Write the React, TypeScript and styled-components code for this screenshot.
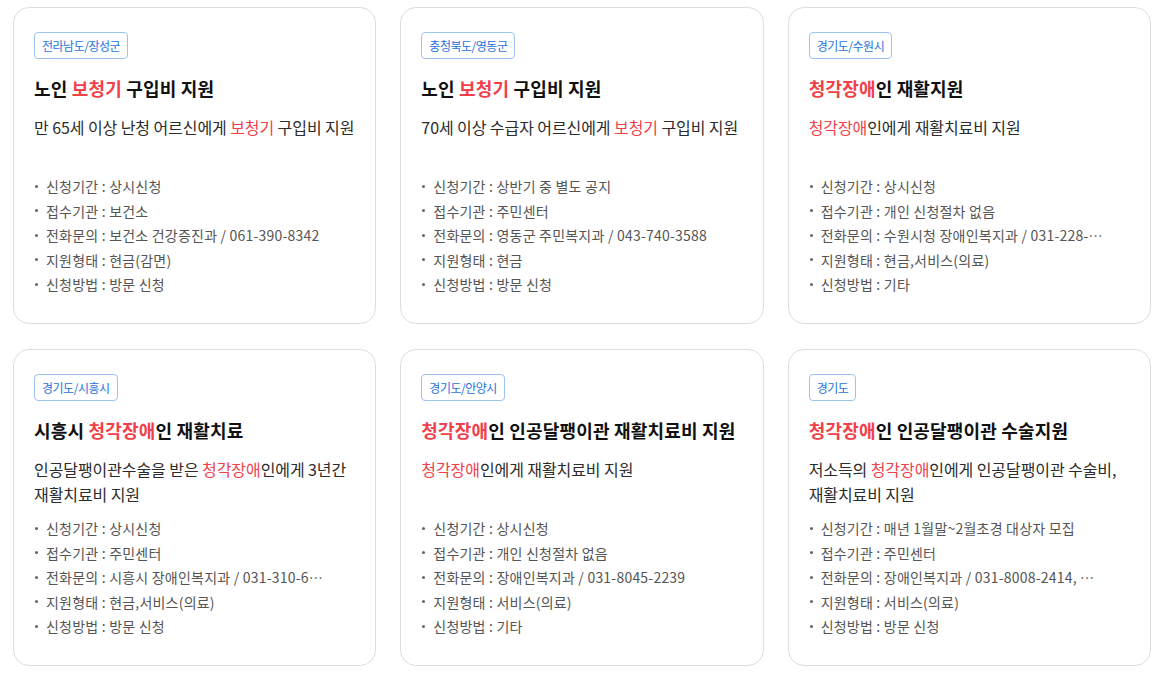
import React from "react";
import styled, { createGlobalStyle } from "styled-components";

const GlobalStyle = createGlobalStyle`
  html, body {
    margin: 0;
    padding: 0;
    background: #ffffff;
    font-family: "Noto Sans CJK KR", "Noto Sans", sans-serif;
  }
  * { box-sizing: border-box; }
`;

const Grid = styled.div`
  display: grid;
  grid-template-columns: repeat(3, 1fr);
  column-gap: 24px;
  row-gap: 25px;
  padding: 7px 12px 0 13px;
`;

const Card = styled.article`
  display: flex;
  flex-direction: column;
  align-items: flex-start;
  height: 317px;
  padding: 24px 20px 26px;
  border: 1px solid #dedede;
  border-radius: 16px;
  background: #ffffff;
  overflow: hidden;
`;

const Tag = styled.span`
  display: inline-block;
  height: 27px;
  padding: 0 7px;
  border: 1px solid #9cc3f1;
  border-radius: 4px;
  font-size: 12px;
  line-height: 25px;
  letter-spacing: -0.04em;
  color: #1f72dc;
  white-space: nowrap;
`;

const Title = styled.h3`
  margin: 16px 0 0;
  font-size: 18px;
  line-height: 26px;
  font-weight: 700;
  letter-spacing: 0.01em;
  color: #111111;
  word-break: keep-all;
`;

const Desc = styled.p`
  margin: 14px 0 0;
  min-height: 50px;
  font-size: 16px;
  line-height: 25px;
  font-weight: 400;
  letter-spacing: -0.005em;
  color: #2b2b2b;
  word-break: keep-all;
`;

const Hl = styled.span`
  color: #f2404a;
`;

const List = styled.ul`
  margin: 9px 0 0;
  padding: 0;
  list-style: none;
  width: 100%;
`;

const Item = styled.li`
  display: flex;
  align-items: center;
  height: 24.5px;
  font-size: 14px;
  letter-spacing: 0.015em;
  color: #555555;
  white-space: pre;

  &::before {
    content: "";
    flex: none;
    width: 3px;
    height: 3px;
    margin: 0 8px 0 1px;
    border-radius: 50%;
    background: #666666;
  }
`;

type CardData = {
  tag: string;
  title: string;
  desc: string;
  items: [string, string][];
};

const cards: CardData[] = [
  {
    tag: "전라남도/장성군",
    title: "노인 {보청기} 구입비 지원",
    desc: "만 65세 이상 난청 어르신에게 {보청기} 구입비 지원",
    items: [
      ["신청기간", "상시신청"],
      ["접수기관", "보건소"],
      ["전화문의", "보건소 건강증진과 / 061-390-8342"],
      ["지원형태", "현금(감면)"],
      ["신청방법", "방문 신청"],
    ],
  },
  {
    tag: "충청북도/영동군",
    title: "노인 {보청기} 구입비 지원",
    desc: "70세 이상 수급자 어르신에게 {보청기} 구입비 지원",
    items: [
      ["신청기간", "상반기 중 별도 공지"],
      ["접수기관", "주민센터"],
      ["전화문의", "영동군 주민복지과 / 043-740-3588"],
      ["지원형태", "현금"],
      ["신청방법", "방문 신청"],
    ],
  },
  {
    tag: "경기도/수원시",
    title: "{청각장애}인 재활지원",
    desc: "{청각장애}인에게 재활치료비 지원",
    items: [
      ["신청기간", "상시신청"],
      ["접수기관", "개인 신청절차 없음"],
      ["전화문의", "수원시청 장애인복지과 / 031-228-⋯"],
      ["지원형태", "현금,서비스(의료)"],
      ["신청방법", "기타"],
    ],
  },
  {
    tag: "경기도/시흥시",
    title: "시흥시 {청각장애}인 재활치료",
    desc: "인공달팽이관수술을 받은 {청각장애}인에게 3년간 재활치료비 지원",
    items: [
      ["신청기간", "상시신청"],
      ["접수기관", "주민센터"],
      ["전화문의", "시흥시 장애인복지과 / 031-310-6⋯"],
      ["지원형태", "현금,서비스(의료)"],
      ["신청방법", "방문 신청"],
    ],
  },
  {
    tag: "경기도/안양시",
    title: "{청각장애}인 인공달팽이관 재활치료비 지원",
    desc: "{청각장애}인에게 재활치료비 지원",
    items: [
      ["신청기간", "상시신청"],
      ["접수기관", "개인 신청절차 없음"],
      ["전화문의", "장애인복지과 / 031-8045-2239"],
      ["지원형태", "서비스(의료)"],
      ["신청방법", "기타"],
    ],
  },
  {
    tag: "경기도",
    title: "{청각장애}인 인공달팽이관 수술지원",
    desc: "저소득의 {청각장애}인에게 인공달팽이관 수술비, 재활치료비 지원",
    items: [
      ["신청기간", "매년 1월말~2월초경 대상자 모집"],
      ["접수기관", "주민센터"],
      ["전화문의", "장애인복지과 / 031-8008-2414, ⋯"],
      ["지원형태", "서비스(의료)"],
      ["신청방법", "방문 신청"],
    ],
  },
];

function renderMarked(text: string) {
  const parts = text.split(/(\{[^}]+\})/g).filter(Boolean);
  return parts.map((p, i) =>
    p.startsWith("{") ? <Hl key={i}>{p.slice(1, -1)}</Hl> : <React.Fragment key={i}>{p}</React.Fragment>
  );
}

export default function App() {
  return (
    <>
      <GlobalStyle />
      <Grid>
        {cards.map((c, i) => (
          <Card key={i}>
            <Tag>{c.tag}</Tag>
            <Title>{renderMarked(c.title)}</Title>
            <Desc>{renderMarked(c.desc)}</Desc>
            <List>
              {c.items.map(([k, v], j) => (
                <Item key={j}>{`${k} : ${v}`}</Item>
              ))}
            </List>
          </Card>
        ))}
      </Grid>
    </>
  );
}
